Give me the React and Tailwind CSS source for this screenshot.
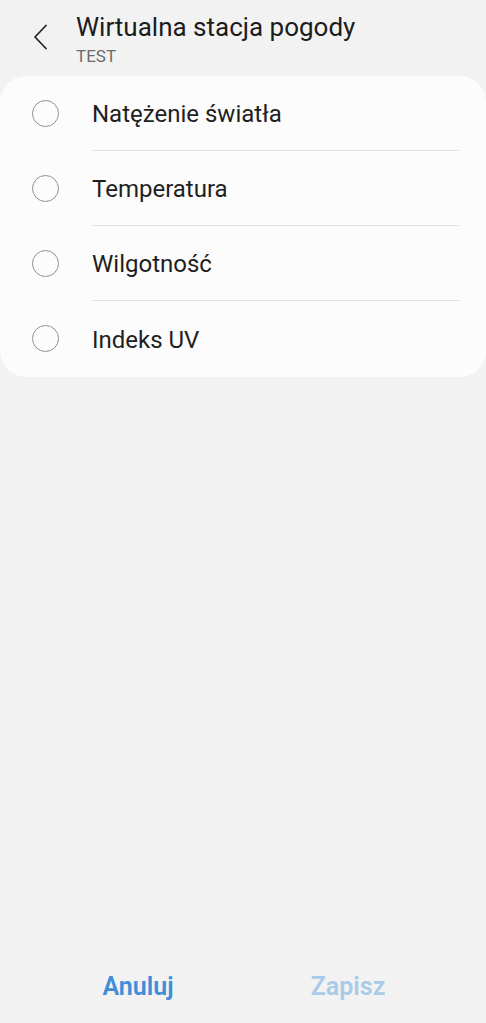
import React, { useState } from 'react';

const OPTIONS = ['Natężenie światła', 'Temperatura', 'Wilgotność', 'Indeks UV'];

const App = () => {
    const [selected, setSelected] = useState(null);

    return (
        <div className="flex flex-col h-[1023px] bg-[#f2f2f2] font-['Roboto',sans-serif]">
            <div className="flex items-start h-[76px] pt-[12px]">
                <button className="w-[76px] h-[50px] flex items-center justify-center pl-[6px]">
                    <svg width="16" height="26" viewBox="0 0 16 26" fill="none">
                        <path d="M13 1.5L2 13L13 24.5" stroke="#262626" strokeWidth="1.8" strokeLinecap="round" strokeLinejoin="round" />
                    </svg>
                </button>
                <div className="flex flex-col gap-[4px]">
                    <h1 className="text-[26px] leading-[30px] text-[#1c1c1c]">Wirtualna stacja pogody</h1>
                    <span className="text-[17px] leading-[20px] text-[#6b6b6b]">TEST</span>
                </div>
            </div>

            <div className="bg-[#fcfcfc] rounded-[26px] h-[301px] flex flex-col">
                {OPTIONS.map((label, i) => (
                    <button
                        key={label}
                        onClick={() => setSelected(i)}
                        className="flex items-center h-[75px] text-left shrink-0"
                    >
                        <div className="w-[92px] flex justify-center pr-[1px]">
                            <div className="w-[27px] h-[27px] rounded-full border-[1.5px] border-[#8f8f8f] flex items-center justify-center">
                                {selected === i && <div className="w-[15px] h-[15px] rounded-full bg-[#3e8ed8]" />}
                            </div>
                        </div>
                        <div className={`flex-1 h-full flex items-center mr-[27px] ${i < OPTIONS.length - 1 ? 'border-b border-[#e3e3e3]' : ''}`}>
                            <span className="text-[24px] leading-[28px] pt-[2px] text-[#1f1f1f]">{label}</span>
                        </div>
                    </button>
                ))}
            </div>

            <div className="flex-1" />

            <div className="flex h-[72px] px-[33px]">
                <button className="flex-1 flex items-center justify-center text-[25px] font-semibold text-[#3e8ed8]">Anuluj</button>
                <button className="flex-1 flex items-center justify-center text-[25px] font-semibold text-[#a9cbe9]">Zapisz</button>
            </div>
        </div>
    );
};

export default App;
